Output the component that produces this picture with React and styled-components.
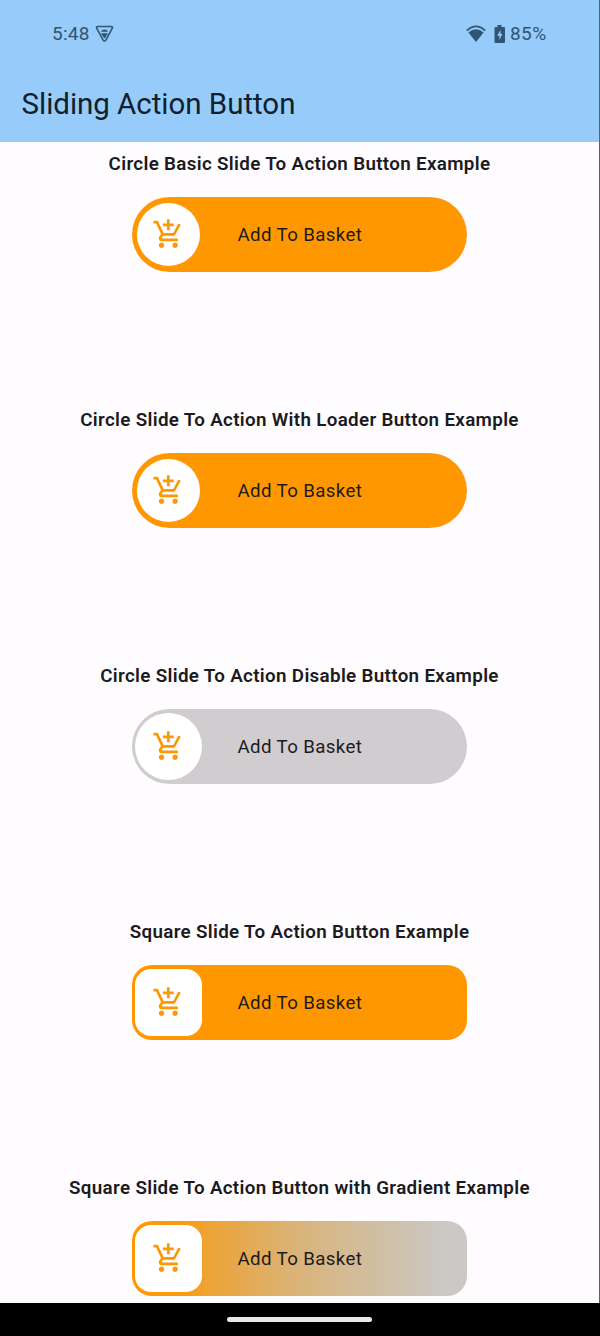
import React from "react";
import styled, { createGlobalStyle } from "styled-components";
import { MdAddShoppingCart } from "react-icons/md";

const GlobalStyle = createGlobalStyle`
  * { box-sizing: border-box; }
  body { margin: 0; background: #fefcfe; font-family: Roboto, "Liberation Sans", sans-serif; }
`;

const Screen = styled.div`
  width: 600px;
  height: 1336px;
  display: flex;
  flex-direction: column;
  overflow: hidden;
  background: #fefcfe;
`;

const Header = styled.header`
  height: 142px;
  flex: none;
  background: #97cbf9;
  border-right: 1px solid #3b6d94;
`;

const StatusBar = styled.div`
  height: 66px;
  padding: 2px 52px 0 52px;
  display: flex;
  align-items: center;
  color: #315573;
  font-size: 19px;
  line-height: 22px;
  svg { display: block; }
`;

const Clock = styled.span`
  width: 43px;
  letter-spacing: 0.25px;
`;

const StatusIcons = styled.div`
  margin-left: auto;
  display: flex;
  align-items: center;
  gap: 8px;
`;

const Battery = styled.span`
  margin-left: -3px;
  letter-spacing: 0.4px;
  transform: translateX(-0.5px);
`;

const Title = styled.h1`
  margin: 0;
  height: 76px;
  padding-left: 21.5px;
  font-size: 29.5px;
  font-weight: 400;
  line-height: 76px;
  letter-spacing: -0.03px;
  color: #10202d;
`;

const List = styled.main`
  flex: 1;
  min-height: 0;
  overflow: hidden;
  border-right: 1px solid #5e5c5e;
`;

const Example = styled.section`
  height: 255.9px;
  padding-top: 9px;
  display: flex;
  flex-direction: column;
  align-items: center;
`;

const Heading = styled.h2`
  margin: 0 0 19.4px;
  font-size: 18.8px;
  line-height: 27px;
  font-weight: 600;
  letter-spacing: 0.33px;
  color: #1b1a1d;
  white-space: nowrap;
`;

const Track = styled.div`
  width: 334.5px;
  height: 74.6px;
  flex: none;
  padding-left: ${(p) => p.$inset}px;
  display: flex;
  align-items: center;
  border-radius: ${(p) => p.$radius}px;
  background: ${(p) => p.$fill};
`;

const Thumb = styled.button`
  width: ${(p) => p.$size}px;
  height: ${(p) => p.$height}px;
  flex: none;
  padding: 0;
  border: 0;
  display: flex;
  align-items: center;
  justify-content: center;
  border-radius: ${(p) => p.$radius};
  background: #fff;
  color: #ff9800;
`;

const Label = styled.span`
  flex: 1;
  padding-top: 1.6px;
  padding-left: ${(p) => p.$gap}px;
  font-size: 18.7px;
  letter-spacing: 0.37px;
  color: #1d1b1e;
`;

const NavBar = styled.footer`
  height: 33px;
  flex: none;
  display: flex;
  align-items: center;
  justify-content: center;
  padding-right: 1px;
  background: #000;
`;

const Handle = styled.div`
  width: 145px;
  height: 5px;
  border-radius: 3px;
  background: #eae6ea;
`;

const ORANGE = "#ff9800";
const examples = [
  { title: "Circle Basic Slide To Action Button Example", fill: ORANGE, radius: 37.5, inset: 4.4, size: 63, height: 63, round: "50%" },
  { title: "Circle Slide To Action With Loader Button Example", fill: ORANGE, radius: 37.5, inset: 4.4, size: 63, height: 63, round: "50%" },
  { title: "Circle Slide To Action Disable Button Example", fill: "#d0cccf", radius: 37.5, inset: 2.8, size: 67, height: 67.4, round: "50%" },
  { title: "Square Slide To Action Button Example", fill: ORANGE, radius: 20, inset: 2.8, size: 67, height: 67.4, round: "16px" },
  {
    title: "Square Slide To Action Button with Gradient Example",
    fill: "linear-gradient(90deg, #ff9800 0%, #fb9b10 16%, #eea333 22%, #e6a84d 32%, #dcb271 46%, #d5b98d 60%, #cfc0a8 76%, #cbc8c5 94%)",
    radius: 20, inset: 2.8, size: 67, height: 67.4, round: "16px",
  },
];

function ShieldIcon() {
  return (
    <svg width="19" height="18" viewBox="0 0 19 18">
      <path d="M3 1.5h13q2.2 0 1.2 2L11 14.9q-1.5 2.3-3 0L1.8 3.5q-1-2 1.2-2z" fill="none" stroke="currentColor" strokeWidth="1.6" />
      <path d="M6 6.8q.6-2.4 3.5-2.4T13 6.8zM6 8.2h7L10.4 12.6q-.9 1.2-1.8 0z" fill="currentColor" />
    </svg>
  );
}

function WifiIcon() {
  return (
    <svg width="20" height="18" viewBox="0 0 20 18">
      <path d="M.8 5.6Q10-2.8 19.2 5.6" fill="none" stroke="currentColor" strokeWidth="1.7" />
      <path d="M2.4 7.4Q10 1.2 17.6 7.4L10 17z" fill="currentColor" />
    </svg>
  );
}

function BatteryIcon() {
  return (
    <svg width="12" height="18" viewBox="0 0 12 18">
      <path d="M3.5 0h4v2H10q1 0 1 1v14q0 1-1 1H1.5q-1 0-1-1V3q0-1 1-1h2z" fill="currentColor" />
      <path d="M6.5 5L3.2 10.7h2.2V15L8.4 9H6.5z" fill="#97cbf9" />
    </svg>
  );
}

function SlideButton({ item }) {
  return (
    <Track $fill={item.fill} $radius={item.radius} $inset={item.inset}>
      <Thumb $size={item.size} $height={item.height} $radius={item.round} aria-label="Slide to add">
        <MdAddShoppingCart size={32.7} />
      </Thumb>
      <Label $gap={105.3 - item.inset - item.size}>Add To Basket</Label>
    </Track>
  );
}

export default function App() {
  return (
    <Screen>
      <GlobalStyle />
      <Header>
        <StatusBar>
          <Clock>5:48</Clock>
          <ShieldIcon />
          <StatusIcons>
            <WifiIcon />
            <BatteryIcon />
            <Battery>85%</Battery>
          </StatusIcons>
        </StatusBar>
        <Title>Sliding Action Button</Title>
      </Header>
      <List>
        {examples.map((item) => (
          <Example key={item.title}>
            <Heading>{item.title}</Heading>
            <SlideButton item={item} />
          </Example>
        ))}
      </List>
      <NavBar>
        <Handle />
      </NavBar>
    </Screen>
  );
}
